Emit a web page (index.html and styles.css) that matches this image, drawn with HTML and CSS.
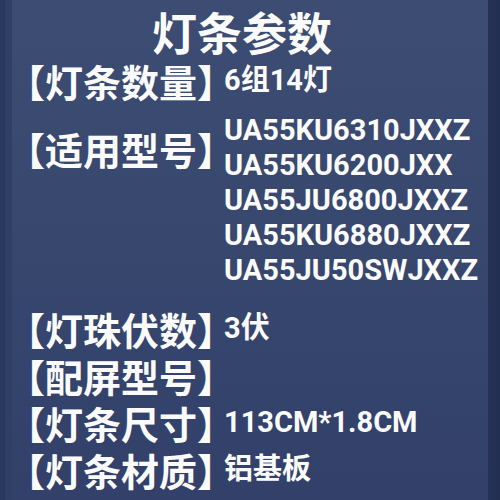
FILE: index.html
```html
<!DOCTYPE html>
<html lang="zh-CN">
<head>
<meta charset="utf-8">
<title>灯条参数</title>
<link rel="stylesheet" href="styles.css">
</head>
<body>
<div class="page">
  <h1 class="title">灯条参数</h1>
  <div class="row">
    <div class="label">【灯条数量】</div>
    <div class="value">6组14灯</div>
  </div>
  <div class="row models">
    <div class="label">【适用型号】</div>
    <div class="value list">
      <div>UA55KU6310JXXZ</div>
      <div>UA55KU6200JXX</div>
      <div>UA55JU6800JXXZ</div>
      <div>UA55KU6880JXXZ</div>
      <div>UA55JU50SWJXXZ</div>
    </div>
  </div>
  <div class="row">
    <div class="label">【灯珠伏数】</div>
    <div class="value">3伏</div>
  </div>
  <div class="row">
    <div class="label">【配屏型号】</div>
    <div class="value"></div>
  </div>
  <div class="row">
    <div class="label">【灯条尺寸】</div>
    <div class="value">113CM*1.8CM</div>
  </div>
  <div class="row">
    <div class="label">【灯条材质】</div>
    <div class="value">铝基板</div>
  </div>
</div>
</body>
</html>
```
FILE: styles.css
```css
html, body {
  margin: 0;
  padding: 0;
}
body {
  width: 500px;
  height: 500px;
  overflow: hidden;
}
.page {
  box-sizing: border-box;
  width: 500px;
  height: 500px;
  padding: 7px 0 0 8px;
  color: #fbfbfb;
  font-family: "Roboto", "Noto Sans CJK SC", sans-serif;
  font-weight: 700;
  background:
    linear-gradient(to right, #2b3960 0, #2b3960 5px, #303f66 5px, #303f66 12px, transparent 12px, transparent 488px, #263358 488px, #222e50 500px),
    linear-gradient(to bottom, #3c4c72 0%, #37476e 50%, #32406a 100%);
}
.title {
  margin: 0;
  padding-right: 24px;
  font-size: 45px;
  line-height: 50px;
  font-weight: 700;
  text-align: center;
  font-family: "Noto Sans CJK SC", sans-serif;
}
.row {
  display: flex;
  align-items: center;
  height: 47px;
}
.label {
  flex: none;
  box-sizing: border-box;
  width: 216px;
  padding: 7px 0 0 18px;
  font-family: "Liberation Sans", "Noto Sans CJK SC", sans-serif;
  font-size: 38px;
  line-height: 40px;
  font-feature-settings: "halt";
  white-space: nowrap;
}
.value {
  font-size: 29px;
  line-height: 47px;
  white-space: nowrap;
}
.row.models {
  height: auto;
  align-items: flex-start;
  margin-top: 9px;
  margin-bottom: 17px;
}
.models .label {
  margin-top: 12px;
}
.list {
  line-height: 35px;
}
```
